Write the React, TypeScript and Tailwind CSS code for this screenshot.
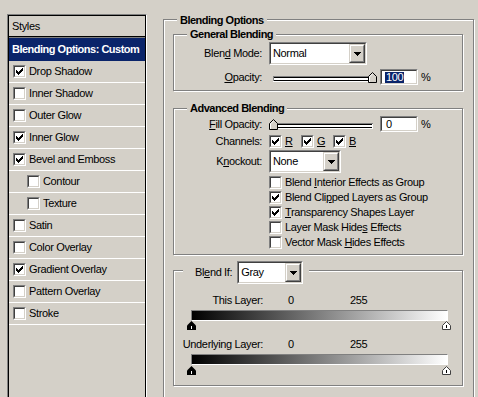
import React from "react";

const CHECK = ["......#", ".....##", "#...###", "##.###.", "#####..", ".###...", "..#...."];

function CheckMark() {
  const rects: React.ReactElement[] = [];
  CHECK.forEach((row, y) =>
    row.split("").forEach((c, x) => {
      if (c === "#") rects.push(<rect key={`${x}-${y}`} x={x} y={y} width={1} height={1} fill="#000" />);
    })
  );
  return (
    <svg width="7" height="7" viewBox="0 0 7 7" shapeRendering="crispEdges">
      {rects}
    </svg>
  );
}

function Checkbox({ checked }: { checked?: boolean }) {
  return (
    <div className="flex w-[13px] h-[13px] shrink-0 border border-t-[#808080] border-l-[#808080] border-b-white border-r-white">
      <div className="flex flex-1 items-center justify-center border border-t-[#404040] border-l-[#404040] border-b-[#d4d0c8] border-r-[#d4d0c8] bg-white">
        {checked ? <CheckMark /> : null}
      </div>
    </div>
  );
}

function Arrow() {
  return (
    <svg width="7" height="4" viewBox="0 0 7 4" shapeRendering="crispEdges">
      <rect x="0" y="0" width="7" height="1" fill="#000" />
      <rect x="1" y="1" width="5" height="1" fill="#000" />
      <rect x="2" y="2" width="3" height="1" fill="#000" />
      <rect x="3" y="3" width="1" height="1" fill="#000" />
    </svg>
  );
}

function Select({ text, className }: { text: string; className: string }) {
  return (
    <div className={`flex h-[23px] shrink-0 border border-t-[#808080] border-l-[#808080] border-b-white border-r-white ${className}`}>
      <div className="flex flex-1 items-stretch border border-t-[#404040] border-l-[#404040] border-b-[#d4d0c8] border-r-[#d4d0c8] bg-white">
        <div className="flex flex-1 items-center pl-[2px] whitespace-nowrap">{text}</div>
        <div className="flex w-[16px] border border-t-[#d4d0c8] border-l-[#d4d0c8] border-b-[#404040] border-r-[#404040]">
          <div className="flex flex-1 items-center justify-center border border-t-white border-l-white border-b-[#808080] border-r-[#808080] bg-[#d4d0c8]">
            <Arrow />
          </div>
        </div>
      </div>
    </div>
  );
}

function NumberInput({ value, selected }: { value: string; selected?: boolean }) {
  return (
    <div className="flex w-[38px] h-[16px] shrink-0 border border-t-[#808080] border-l-[#808080] border-b-white border-r-white">
      <div className="flex flex-1 items-center border border-t-[#404040] border-l-[#404040] border-b-[#d4d0c8] border-r-[#d4d0c8] bg-white pl-[3px]">
        {selected ? (
          <span className="bg-[#0a246a] text-white px-[1px] leading-[11px]">{value}</span>
        ) : (
          <span className="pl-[1px]">{value}</span>
        )}
      </div>
    </div>
  );
}

function Slider({ max }: { max?: boolean }) {
  const tx = max ? 99 : 0;
  return (
    <svg width="110" height="16" viewBox="0 0 110 16" shapeRendering="crispEdges" className="shrink-0">
      <rect x="4" y="7" width="100" height="1" fill="#808080" />
      <rect x="4" y="8" width="99" height="1" fill="#000" />
      <rect x="4" y="8" width="1" height="4" fill="#808080" />
      <rect x="5" y="9" width="98" height="2" fill="#fff" />
      <rect x="5" y="11" width="98" height="1" fill="#000" />
      <rect x="4" y="12" width="100" height="1" fill="#fff" />
      <rect x="103" y="8" width="1" height="4" fill="#fff" />
      <g transform={`translate(${tx},3)`} shapeRendering="auto">
        <polygon points="0.5,4.5 4.5,0.5 8.5,4.5 8.5,10.5 0.5,10.5" fill="#d4d0c8" stroke="#000" strokeWidth="1" />
        <polyline points="1.5,10 1.5,4.9 4.5,1.9" fill="none" stroke="#fff" strokeWidth="1" />
      </g>
    </svg>
  );
}

function Thumb({ dark }: { dark?: boolean }) {
  return dark ? (
    <svg width="9" height="9" viewBox="0 0 9 9">
      <polygon points="0,9 0,4.5 4.5,0 9,4.5 9,9" fill="#000" />
      <rect x="4" y="5" width="1" height="3" fill="#fff" />
    </svg>
  ) : (
    <svg width="9" height="9" viewBox="0 0 9 9">
      <polygon points="0.5,8.5 0.5,4.5 4.5,0.5 8.5,4.5 8.5,8.5" fill="#fff" stroke="#404040" strokeWidth="1" />
      <rect x="4" y="4" width="1" height="3" fill="#000" />
    </svg>
  );
}

const etched = "border border-[#808080] shadow-[inset_1px_1px_0_#fff,1px_1px_0_#fff]";

function Label({ children }: { children: React.ReactNode }) {
  return <div className="flex w-[88px] shrink-0 justify-end whitespace-nowrap">{children}</div>;
}

const styleItems: { label: string; checked: boolean; indent?: boolean }[] = [
  { label: "Drop Shadow", checked: true },
  { label: "Inner Shadow", checked: false },
  { label: "Outer Glow", checked: false },
  { label: "Inner Glow", checked: true },
  { label: "Bevel and Emboss", checked: true },
  { label: "Contour", checked: false, indent: true },
  { label: "Texture", checked: false, indent: true },
  { label: "Satin", checked: false },
  { label: "Color Overlay", checked: false },
  { label: "Gradient Overlay", checked: true },
  { label: "Pattern Overlay", checked: false },
  { label: "Stroke", checked: false },
];

function LeftPanel() {
  return (
    <div className="ml-[7px] mt-[14px] w-[140px] h-[400px] shrink-0 border-t border-l border-r border-t-[#808080] border-l-[#808080] border-r-white">
      <div className="h-full border-t border-l border-r border-black">
        <div className="flex h-[21px] items-center border-b border-black pl-[3px]">Styles</div>
        <div className="h-px bg-[#808080]" />
        <div className="flex h-[23px] items-center bg-[#0a246a] pl-[3px] font-bold text-white tracking-[-0.5px] whitespace-nowrap">
          Blending Options: Custom
        </div>
        {styleItems.map((it) => (
          <div
            key={it.label}
            className={`flex h-[22px] items-center gap-[3px] border-b border-white ${it.indent ? "pl-[18px]" : "pl-[4px]"}`}
          >
            <Checkbox checked={it.checked} />
            <span className="whitespace-nowrap">{it.label}</span>
          </div>
        ))}
      </div>
    </div>
  );
}

function GroupTitle({ children, className }: { children: React.ReactNode; className: string }) {
  return (
    <div className={`absolute bg-[#d4d0c8] px-[3px] font-bold tracking-[-0.5px] whitespace-nowrap ${className}`}>{children}</div>
  );
}

const options = [
  { pre: "Blend ", u: "I", post: "nterior Effects as Group", checked: false },
  { pre: "Blend Cli", u: "p", post: "ped Layers as Group", checked: true },
  { pre: "", u: "T", post: "ransparency Shapes Layer", checked: true },
  { pre: "Layer Mask Hide", u: "s", post: " Effects", checked: false },
  { pre: "Vector Mask ", u: "H", post: "ides Effects", checked: false },
];

function BlendRow({ label }: { label: string }) {
  return (
    <>
      <div className="flex h-[13px] items-center whitespace-nowrap">
        <div className="flex w-[72px] shrink-0 justify-end whitespace-nowrap">{label}</div>
        <span className="ml-[25px] w-[62px]">0</span>
        <span>255</span>
      </div>
      <div className="mt-[3px] h-[11px] w-[257px] border border-t-[#808080] border-l-[#808080] border-b-white border-r-white bg-[linear-gradient(to_right,#000,#fff)]" />
    </>
  );
}

function Thumbs({ className }: { className: string }) {
  return (
    <div className={`relative h-[9px] w-[257px] ${className}`}>
      <div className="absolute left-[-4px] top-0 flex">
        <Thumb dark />
      </div>
      <div className="absolute left-[251px] top-0 flex">
        <Thumb />
      </div>
    </div>
  );
}

function RightPanel() {
  return (
    <div className={`relative ml-[16px] mt-[19px] w-[311px] h-[400px] shrink-0 pl-[9px] pt-[14px] ${etched}`}>
      <GroupTitle className="left-[13px] top-[-6px]">Blending Options</GroupTitle>

      {/* General Blending */}
      <div className={`relative w-[290px] pt-[7px] pb-[5px] ${etched}`}>
        <GroupTitle className="left-[13px] top-[-7px]">General Blending</GroupTitle>
        <div className="flex h-[23px] items-center">
          <Label>
            Blen<u>d</u>&nbsp;Mode:
          </Label>
          <Select text="Normal" className="ml-[7px] w-[98px]" />
        </div>
        <div className="mt-[4px] flex h-[16px] items-center">
          <Label>
            <u>O</u>pacity:
          </Label>
          <div className="ml-[7px] flex">
            <Slider max />
          </div>
          <div className="ml-[1px] flex">
            <NumberInput value="100" selected />
          </div>
          <span className="ml-[3px]">%</span>
        </div>
      </div>

      {/* Advanced Blending */}
      <div className={`relative mt-[17px] w-[290px] pt-[7px] pb-[4px] ${etched}`}>
        <GroupTitle className="left-[13px] top-[-7px]">Advanced Blending</GroupTitle>
        <div className="flex h-[16px] items-center">
          <Label>
            <u>F</u>ill Opacity:
          </Label>
          <div className="ml-[7px] flex">
            <Slider />
          </div>
          <div className="ml-[1px] flex">
            <NumberInput value="0" />
          </div>
          <span className="ml-[3px]">%</span>
        </div>
        <div className="mt-[3px] flex h-[13px] items-center">
          <Label>Channels:</Label>
          <div className="ml-[7px] flex">
            {["R", "G", "B"].map((c) => (
              <div key={c} className="flex w-[32px] items-center gap-[3px]">
                <Checkbox checked />
                <u>{c}</u>
              </div>
            ))}
          </div>
        </div>
        <div className="mt-[2px] flex h-[23px] items-center">
          <Label>
            K<u>n</u>ockout:
          </Label>
          <Select text="None" className="ml-[7px] w-[72px]" />
        </div>
        <div className="mt-[2px] flex flex-col pl-[95px]">
          {options.map((o) => (
            <div key={o.post} className="flex h-[15px] items-center gap-[3px] whitespace-nowrap">
              <Checkbox checked={o.checked} />
              <span>
                {o.pre}
                <u>{o.u}</u>
                {o.post}
              </span>
            </div>
          ))}
        </div>
      </div>

      {/* Blend If */}
      <div className={`relative mt-[15px] w-[290px] pl-[17px] pt-[23px] pb-[10px] ${etched}`}>
        <div className="absolute left-[9px] top-[-10px] flex h-[23px] items-center bg-[#d4d0c8] pl-[12px] pr-[6px]">
          <span className="whitespace-nowrap">
            Bl<u>e</u>nd If:
          </span>
          <Select text="Gray" className="ml-[5px] w-[66px]" />
        </div>
        <BlendRow label="This Layer:" />
        <Thumbs className="" />
        <div className="mt-[8px]">
          <BlendRow label="Underlying Layer:" />
        </div>
        <Thumbs className="mt-[1px]" />
      </div>
    </div>
  );
}

export default function App() {
  return (
    <div className="flex h-[397px] w-[478px] items-start overflow-hidden bg-[#d4d0c8] font-['Liberation_Sans',Arial,sans-serif] text-[11px] leading-[13px] tracking-[-0.35px] text-black">
      <LeftPanel />
      <RightPanel />
    </div>
  );
}
